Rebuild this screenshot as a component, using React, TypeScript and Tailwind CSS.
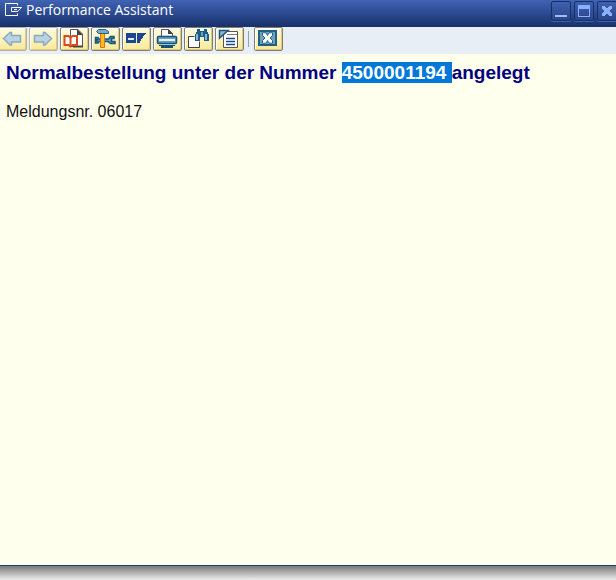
import type { ReactNode } from "react";

function Icon({ children }: { children: ReactNode }) {
  return (
    <svg width="29" height="24" viewBox="0 0 29 24" fill="none" className="shrink-0" aria-hidden="true">
      {children}
    </svg>
  );
}

const arrow = "M5.5 8.5H14.5V5.5H16L22.5 11.5L16 18H14.5V15H5.5Z";

const BackIcon = (
  <Icon>
    <g transform="translate(28 0) scale(-1 1)">
      <path d={arrow} fill="#b9d3e2" stroke="#86abc0" strokeWidth="1.5" />
    </g>
  </Icon>
);

const ForwardIcon = (
  <Icon>
    <path d={arrow} fill="#b9d3e2" stroke="#86abc0" strokeWidth="1.5" />
  </Icon>
);

const ManualIcon = (
  <Icon>
    <path d="M10.5 12V2.5H18L22.5 7V19.5H10.5Z" fill="#fff" stroke="#555" />
    <path d="M17 2L23 8H17Z" fill="#444" />
    <path d="M13 18.5H23V20.5H13Z" fill="#444" />
    <path d="M4.5 9H8.5L10.5 10.5L12.5 9H17V18H12.5L10.5 19.5L8.5 18H4.5Z" fill="#fff" stroke="#d8491c" strokeWidth="2" />
    <path d="M10.5 10V19.5" stroke="#d8491c" strokeWidth="2" />
  </Icon>
);

const ToolsIcon = (
  <Icon>
    <path d="M4.5 10.5H7V12H17.5L19.5 9.5H23V11.5H20.5V14.5H24V16.5H19.5L17 14.5H8L7 16H4.5V14H6V12.5H4.5Z" fill="#6aa0bc" stroke="#125681" strokeWidth="1.5" />
    <path d="M9.5 6.5H13.5V20.5H9.5Z" fill="#ffbd20" stroke="#e0701c" />
    <path d="M5.5 4.5L7.5 2.5H14.5L17.5 4.5V6.5H7.5Z" fill="#79adc5" stroke="#245f84" />
  </Icon>
);

const SettingsIcon = (
  <Icon>
    <path d="M4 6H14V16H4Z" fill="#1c4691" />
    <path d="M6 11H12V13H6Z" fill="#dceaf2" />
    <path d="M15 6H24V7H23V8H22V9H21V11H20V12H19V14H18V16H15Z" fill="#1c4691" />
  </Icon>
);

const PrintIcon = (
  <Icon>
    <path d="M8.5 10V2.5H15.5L19.5 6.5V10Z" fill="#fff" stroke="#555" />
    <path d="M15 2L20 7H15Z" fill="#444" />
    <rect x="4.5" y="9.5" width="19" height="7" rx="1" fill="#6aa0bc" stroke="#125681" strokeWidth="1.5" />
    <path d="M6 13H22" stroke="#e6f0f4" strokeWidth="2" />
    <path d="M6 18H22V19H20V21H8V19H6Z" fill="#0b5680" />
  </Icon>
);

const FindIcon = (
  <Icon>
    <path d="M4.5 9.5H15.5V20.5H4.5Z" fill="#fff" stroke="#aaa" />
    <path d="M4.5 20.5V9.5H10M15.5 15V20.5H4" stroke="#444" />
    <path d="M13 2H16V4H20V2H23V5H24V7H25V14H20V10H16V14H11V7H12V5H13Z" fill="#17608c" />
    <path d="M12 7H14V13H12ZM21 7H23V13H21Z" fill="#8fb8cd" />
    <path d="M17 5H19V9H17Z" fill="#6aa0bc" />
  </Icon>
);

const ListIcon = (
  <Icon>
    <path d="M8.5 4.5H22.5V20.5H8.5Z" fill="#fff" stroke="#555" />
    <path d="M12 7.5H22" stroke="#777" />
    <path d="M4.5 3.5H13L4.5 11Z" fill="#8fb8cd" stroke="#1c5687" strokeWidth="1.5" />
    <path d="M11 11.5H20M11 14.5H20M11 17.5H20" stroke="#1c4691" strokeWidth="1.5" />
  </Icon>
);

const ExitIcon = (
  <Icon>
    <rect x="4" y="3" width="19" height="16" fill="#1f6089" />
    <rect x="6" y="5" width="15" height="12" fill="#6fa3bd" />
    <path
      d="M8.5 6H12L13.5 8.5L15 6H18.500V8.500L16 11L18.500 13.500V16H15L13.500 13.500L12 16H8.500V13.500L11 11L8.500 8.500Z"
      fill="#fff"
      stroke="#1f6089"
    />
    <path d="M9 6.500H11.500L13.500 9.500L15.500 6.500H18V8L15.500 11L18 14V15.500H15.500L13.500 12.500L11.500 15.500H9V14L11.500 11L9 8Z" fill="#fff" />
  </Icon>
);

function ToolButton({ label, faded = false, children }: { label: string; faded?: boolean; children: ReactNode }) {
  const edge = faded ? "border-[#b9b59d]" : "border-[#827e6b]";
  return (
    <button
      type="button"
      aria-label={label}
      className={`flex h-6 w-[29px] shrink-0 items-center justify-center rounded-[2px] border bg-linear-to-b from-[#fffbe0] to-[#fae998] shadow-[inset_1px_1px_0_#ffffff,inset_-1px_-1px_0_#dcc982] ${edge}`}
    >
      {children}
    </button>
  );
}

function WindowButton({ label, children }: { label: string; children: ReactNode }) {
  return (
    <button
      type="button"
      aria-label={label}
      className="flex size-5 shrink-0 items-center justify-center rounded-[2px] border border-[#172f69] bg-linear-to-b from-[#3f60ad] to-[#29468b] shadow-[0_1px_0_#4562a5]"
    >
      <svg width="18" height="18" viewBox="0 0 18 18" className="shrink-0" aria-hidden="true">
        {children}
      </svg>
    </button>
  );
}

export default function App() {
  return (
    <div className="flex h-screen flex-col overflow-hidden bg-[#eeeeee] font-['Liberation_Sans',Arial,sans-serif]">
      <header className="flex h-[27px] shrink-0 items-start justify-between overflow-hidden bg-linear-to-b from-[#4063b4] to-[#18316c]">
        <div className="flex h-5 items-center gap-1 pl-1">
          <svg width="18" height="14" viewBox="0 0 18 14" fill="none" stroke="#fff" aria-hidden="true">
            <path d="M13.5 2.5V0.5H1.5V12.5H13.5V10.5" />
            <path d="M17.5 4.5H7.5V8.5H13.5L17.5 4.5M10 6.5H13" />
          </svg>
          <h1 className="font-['Open_Sans',sans-serif] text-sm leading-5 whitespace-nowrap text-white">Performance Assistant</h1>
        </div>
        <div className="-mr-px flex gap-[3px] pt-px">
          <WindowButton label="Minimieren">
            <path d="M3 13H15V15H3Z" fill="#9ebcff" />
          </WindowButton>
          <WindowButton label="Maximieren">
            <path d="M3 3H15V15H3ZM4 7V14H14V7Z" fillRule="evenodd" fill="#8eafff" />
          </WindowButton>
          <WindowButton label="Schließen">
            <path d="M4 4H7V5H8V6H10V5H11V4H14V7H13V8H12V10H13V11H14V14H11V13H10V12H8V13H7V14H4V11H5V10H6V8H5V7H4Z" fill="#8eafff" />
          </WindowButton>
        </div>
      </header>
      <div role="toolbar" aria-label="Funktionen" className="-ml-0.5 flex h-[27px] shrink-0 items-start gap-0.5 bg-[#e7eef6]">
        <ToolButton label="Zurück" faded>{BackIcon}</ToolButton>
        <ToolButton label="Vorwärts" faded>{ForwardIcon}</ToolButton>
        <ToolButton label="Anwendungshilfe">{ManualIcon}</ToolButton>
        <ToolButton label="Customizing">{ToolsIcon}</ToolButton>
        <ToolButton label="Dokumentation">{SettingsIcon}</ToolButton>
        <ToolButton label="Drucken">{PrintIcon}</ToolButton>
        <ToolButton label="Suchen">{FindIcon}</ToolButton>
        <ToolButton label="Technische Informationen">{ListIcon}</ToolButton>
        <div className="ml-0.5 mr-[3px] mt-1 h-4 w-px bg-[#99a0a5]" />
        <ToolButton label="Beenden">{ExitIcon}</ToolButton>
      </div>
      <main className="flex-1 border-b border-[#1b3c6b] bg-[#ffffee] px-1.5 pt-2">
        <h2 className="text-[19px] leading-[22px] font-bold text-[#000080]">
          Normalbestellung unter der Nummer <span className="bg-[#0078d7] text-white">4500001194 </span>angelegt
        </h2>
        <p className="mt-[18px] text-base leading-5 text-[#111111]">Meldungsnr. 06017</p>
      </main>
      <div className="h-3.5 shrink-0 bg-linear-to-b from-[#7c7c7c] to-[#eeeeee]" />
    </div>
  );
}
